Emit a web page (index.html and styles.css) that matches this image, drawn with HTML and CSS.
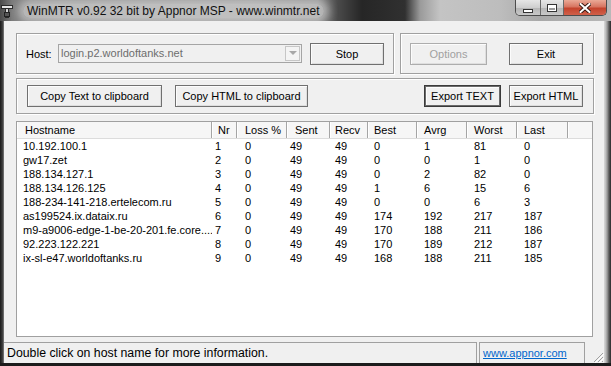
FILE: index.html
```html
<!DOCTYPE html>
<html>
<head>
    <title>WinMTR</title>
    <link rel="stylesheet" href="styles.css">
</head>
<body>
<div class="window">
    <div class="titlebar">
        <svg class="app-icon" width="12" height="14" viewBox="0 0 12 14">
            <rect x="0.5" y="1.5" width="11" height="3" fill="#e4e4e4" stroke="#2a2a2a"/>
            <rect x="4.5" y="4.5" width="3" height="9" fill="#d0d0d0" stroke="#2a2a2a"/>
            <rect x="3.5" y="8.5" width="5" height="4" fill="#555" stroke="#222"/>
        </svg>
        <span class="title">WinMTR v0.92 32 bit by Appnor MSP - www.winmtr.net</span>
        <div class="caption">
            <div class="cap-btn cap-min"><span class="ico-min"></span></div>
            <div class="cap-btn cap-max"><span class="ico-max"></span></div>
            <div class="cap-btn cap-close">
                <svg width="12" height="10" viewBox="0 0 12 10">
                    <path d="M1.5 1 L10.5 9 M10.5 1 L1.5 9" stroke="#3a1a14" stroke-width="4" stroke-linecap="square"/>
                    <path d="M1.5 1 L10.5 9 M10.5 1 L1.5 9" stroke="#fff" stroke-width="2" stroke-linecap="square"/>
                </svg>
            </div>
        </div>
    </div>

    <div class="frame">
        <div class="frame-left"></div>
        <div class="client">
            <div class="top-row">
                <div class="group host-group">
                    <span class="host-label">Host:</span>
                    <div class="combo">
                        <span class="combo-text">login.p2.worldoftanks.net</span>
                        <span class="combo-arrow"><span class="tri"></span></span>
                    </div>
                    <div class="btn stop">Stop</div>
                </div>
                <div class="group opt-group">
                    <div class="btn options disabled">Options</div>
                    <div class="btn exit">Exit</div>
                </div>
            </div>

            <div class="group export-group">
                <div class="btn copy-text">Copy Text to clipboard</div>
                <div class="btn copy-html">Copy HTML to clipboard</div>
                <div class="btn export-text default">Export TEXT</div>
                <div class="btn export-html">Export HTML</div>
            </div>

            <div class="list">
                <div class="list-head">
                    <span>Hostname</span><span>Nr</span><span>Loss %</span><span>Sent</span><span>Recv</span><span>Best</span><span>Avrg</span><span>Worst</span><span>Last</span><span></span>
                </div>
                <div class="list-body" id="rows"></div>
            </div>

            <div class="statusbar">
                <div class="status-main">Double click on host name for more information.</div>
                <div class="status-link"><a href="#">www.appnor.com</a></div>
                <div class="grip">
                    <svg width="12" height="12" viewBox="0 0 12 12">
                        <path d="M11 2 L2 11 M11 6 L6 11 M11 10 L10 11" stroke="#a0a0a0" stroke-width="1"/>
                        <path d="M12 3 L3 12 M12 7 L7 12" stroke="#fff" stroke-width="1"/>
                    </svg>
                </div>
            </div>
        </div>
        <div class="frame-right"></div>
    </div>
    <div class="frame-bottom"></div>
</div>

<script>
    var hops = [
        ["10.192.100.1", 1, 0, 49, 49, 0, 1, 81, 0],
        ["gw17.zet", 2, 0, 49, 49, 0, 0, 1, 0],
        ["188.134.127.1", 3, 0, 49, 49, 0, 2, 82, 0],
        ["188.134.126.125", 4, 0, 49, 49, 1, 6, 15, 6],
        ["188-234-141-218.ertelecom.ru", 5, 0, 49, 49, 0, 0, 6, 3],
        ["as199524.ix.dataix.ru", 6, 0, 49, 49, 174, 192, 217, 187],
        ["m9-a9006-edge-1-be-20-201.fe.core....", 7, 0, 49, 49, 170, 188, 211, 186],
        ["92.223.122.221", 8, 0, 49, 49, 170, 189, 212, 187],
        ["ix-sl-e47.worldoftanks.ru", 9, 0, 49, 49, 168, 188, 211, 185]
    ];

    var rows = document.getElementById("rows");
    hops.forEach(function (hop) {
        var row = document.createElement("div");
        row.className = "row";
        hop.forEach(function (value) {
            var cell = document.createElement("span");
            cell.textContent = value;
            row.appendChild(cell);
        });
        rows.appendChild(row);
    });
</script>
</body>
</html>
```

FILE: styles.css
```css
body {
    margin: 0;
    width: 611px;
    height: 366px;
    overflow: hidden;
    font-family: "Liberation Sans", Arial, sans-serif;
    font-size: 11px;
    color: #000;
    background-color: #222;
}

* {
    box-sizing: border-box;
}

.window {
    display: flex;
    flex-direction: column;
    height: 366px;
}

/* title bar (aero glass) */
.titlebar {
    height: 21px;
    display: flex;
    align-items: flex-start;
    background: linear-gradient(to right, #4a4a4a 0, #7c7c7c 12px, #8e8e8e 60px, #979797 250px, #8a8a8a 318px, #4a4a4a 338px, #262626 362px, #303030 405px, #9a9a9a 420px, #c4c4c4 440px, #bdbdbd 500px, #a8a8a8 540px, #b8b8b8 611px);
}

.app-icon {
    margin: 4px 0 0 1px;
    flex: none;
}

.title {
    margin: 4px 0 0 10px;
    padding: 0 4px;
    font-size: 12px;
    line-height: 14px;
    color: #111;
    background-color: rgba(225, 225, 225, 0.55);
    border-radius: 8px;
    box-shadow: 0 0 8px 5px rgba(225, 225, 225, 0.55);
    white-space: nowrap;
}

.caption {
    display: flex;
    margin-left: auto;
    margin-right: 4px;
    border: 1px solid #4c4c4c;
    border-top: none;
    border-radius: 0 0 5px 5px;
    overflow: hidden;
    height: 16px;
}

.cap-btn {
    height: 15px;
    display: flex;
    align-items: center;
    justify-content: center;
}

.cap-min,
.cap-max {
    background: linear-gradient(#e6e6e6, #cfcfcf 50%, #b4b4b4 51%, #c8c8c8);
    border-right: 1px solid #6a6a6a;
}

.cap-min {
    width: 25px;
}

.cap-max {
    width: 23px;
}

.cap-close {
    width: 42px;
    background: linear-gradient(#eaa996, #d77561 45%, #c4432c 55%, #d0604a);
}

.ico-min {
    width: 10px;
    height: 4px;
    margin-top: 6px;
    background-color: #fff;
    border: 1px solid #333;
}

.ico-max {
    width: 10px;
    height: 8px;
    border: 1px solid #333;
    box-shadow: inset 0 0 0 1px #fff, inset 0 2px 0 1px #fff;
    background-color: #9a9a9a;
}

/* window frame */
.frame {
    display: flex;
    height: 342px;
}

.frame-left {
    width: 4px;
    background: linear-gradient(to right, #1a1a1a, #3c3c3c 60%, #808080);
}

.frame-right {
    width: 7px;
    background: linear-gradient(to right, #dadada, #c4c4c4 20%, #9a9a9a 45%, #5c5c5c 70%, #2a2a2a);
}

.frame-bottom {
    height: 3px;
    background-color: #1c1c1c;
}

.client {
    width: 600px;
    display: flex;
    flex-direction: column;
    padding: 12px 0 0 12px;
    background-color: #f0f0f0;
}

/* group boxes and buttons */
.top-row {
    display: flex;
}

.group {
    display: flex;
    align-items: center;
    border: 1px solid #a0a0a0;
    box-shadow: 1px 1px 0 #fff, inset 1px 1px 0 #fff;
}

.host-group {
    width: 378px;
    height: 41px;
    padding-left: 9px;
}

.host-label {
    width: 32px;
}

.combo {
    width: 244px;
    height: 19px;
    margin-top: -1px;
    display: flex;
    align-items: center;
    border: 1px solid #a5a5a5;
    background-color: #f0f0f0;
}

.combo-text {
    flex: 1;
    padding-left: 2px;
    color: #6d6d6d;
}

.combo-arrow {
    width: 15px;
    height: 15px;
    margin-right: 1px;
    display: flex;
    align-items: center;
    justify-content: center;
    border: 1px solid #c6c6c6;
    background-color: #f4f4f4;
}

.tri {
    width: 0;
    height: 0;
    border-left: 4px solid transparent;
    border-right: 4px solid transparent;
    border-top: 4px solid #a8a8a8;
}

.btn {
    height: 22px;
    display: flex;
    align-items: center;
    justify-content: center;
    border: 1px solid #707070;
    background-color: #f0f0f0;
    box-shadow: inset 1px 1px 0 #fcfcfc, inset -1px -1px 0 #dedede;
    white-space: nowrap;
}

.btn.disabled {
    color: #a0a0a0;
    border-color: #adadad;
}

.btn.default {
    border: 1px solid #3a3a3a;
    box-shadow: inset 0 0 0 1px #6a6a6a, inset 2px 2px 0 #fcfcfc;
}

.stop {
    width: 74px;
    margin-left: 8px;
}

.opt-group {
    width: 194px;
    height: 41px;
    margin-left: 6px;
    padding-left: 9px;
}

.options {
    width: 77px;
}

.exit {
    width: 74px;
    margin-left: 22px;
}

.export-group {
    width: 578px;
    height: 36px;
    margin-top: 4px;
    padding-left: 10px;
}

.copy-text {
    width: 135px;
}

.copy-html {
    width: 133px;
    margin-left: 13px;
}

.export-text {
    width: 77px;
    margin-left: auto;
}

.export-html {
    width: 74px;
    margin-left: 8px;
    margin-right: 10px;
}

/* list view */
.list {
    width: 577px;
    height: 216px;
    margin-top: 7px;
    border: 1px solid #a0a0a0;
    background-color: #fff;
    overflow: hidden;
}

.list-head,
.row {
    display: grid;
    grid-template-columns: 195px 25px 50px 43px 38px 49px 50px 50px 51px 1fr;
    white-space: nowrap;
}

.list-head {
    height: 17px;
    line-height: 16px;
    background-color: #f6f6f6;
    border-bottom: 1px solid #dcdcdc;
}

.list-head span {
    padding-left: 7px;
    border-right: 1px solid #a5a5a5;
    box-shadow: inset 1px 0 0 #fff;
}

.list-head span:last-child {
    border-right: none;
}

.list-head span:nth-child(1) { padding-left: 8px; }
.list-head span:nth-child(2) { padding-left: 6px; }
.list-head span:nth-child(3) { padding-left: 8px; }
.list-head span:nth-child(4) { padding-left: 8px; }
.list-head span:nth-child(5) { padding-left: 5px; }
.list-head span:nth-child(6) { padding-left: 6px; }

.row {
    height: 14px;
    line-height: 14px;
}

.row span {
    padding-left: 7px;
    overflow: hidden;
}

.row span:nth-child(1) { padding-left: 6px; }
.row span:nth-child(2) { padding-left: 3px; }
.row span:nth-child(3) { padding-left: 8px; }
.row span:nth-child(4) { padding-left: 3px; }
.row span:nth-child(5) { padding-left: 5px; }
.row span:nth-child(6) { padding-left: 6px; }

/* status bar */
.statusbar {
    display: flex;
    height: 21px;
    margin: 5px 0 0 -12px;
}

.status-main {
    width: 473px;
    padding-left: 3px;
    font-size: 12.3px;
    line-height: 20px;
    border-top: 1px solid #a0a0a0;
    border-right: 1px solid #a0a0a0;
    white-space: nowrap;
}

.status-link {
    width: 106px;
    margin-left: 2px;
    padding-left: 3px;
    line-height: 20px;
    border: 1px solid #a0a0a0;
    border-bottom: none;
}

.status-link a {
    color: #0066cc;
}

.grip {
    flex: 1;
    display: flex;
    align-items: flex-end;
    justify-content: flex-end;
}
```
